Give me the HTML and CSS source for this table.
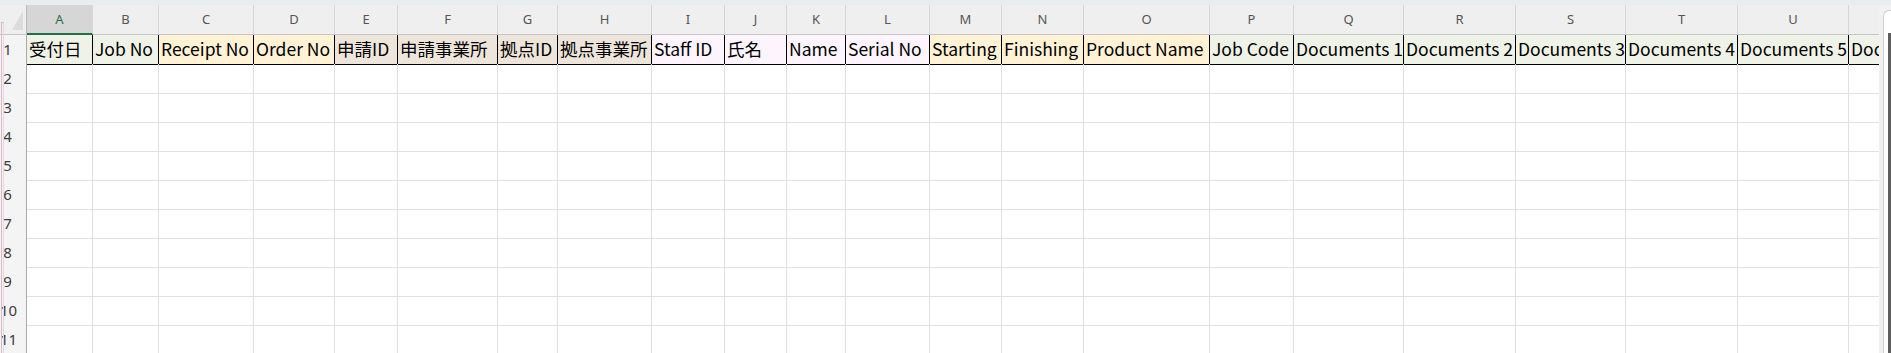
FILE: index.html
```html
<!DOCTYPE html>
<html lang="ja">
<head>
<meta charset="utf-8">
<title>Sheet</title>
<link rel="stylesheet" href="styles.css">
</head>
<body>
<div class="topband"></div>
<div class="main">
  <div class="sheet">
    <div class="edge"></div>
    <div class="row colhead">
      <div class="corner"><span class="tri"></span></div>
      <div class="ch sel">A</div><div class="ch">B</div><div class="ch">C</div><div class="ch">D</div><div class="ch">E</div><div class="ch">F</div><div class="ch">G</div><div class="ch">H</div><div class="ch">I</div><div class="ch">J</div><div class="ch">K</div><div class="ch">L</div><div class="ch">M</div><div class="ch">N</div><div class="ch">O</div><div class="ch">P</div><div class="ch">Q</div><div class="ch">R</div><div class="ch">S</div><div class="ch">T</div><div class="ch">U</div><div class="ch"></div>
    </div>
    <div class="row hdr">
      <div class="rh">1</div>
      <div class="h green">受付日</div>
      <div class="h green">Job No</div>
      <div class="h orange">Receipt No</div>
      <div class="h orange">Order No</div>
      <div class="h tan">申請ID</div>
      <div class="h tan">申請事業所</div>
      <div class="h tan">拠点ID</div>
      <div class="h tan">拠点事業所</div>
      <div class="h pink">Staff ID</div>
      <div class="h pink">氏名</div>
      <div class="h pink">Name</div>
      <div class="h pink">Serial No</div>
      <div class="h orange">Starting</div>
      <div class="h orange">Finishing</div>
      <div class="h orange">Product Name</div>
      <div class="h green">Job Code</div>
      <div class="h green">Documents 1</div>
      <div class="h green">Documents 2</div>
      <div class="h green">Documents 3</div>
      <div class="h green">Documents 4</div>
      <div class="h green">Documents 5</div>
      <div class="h green">Documents 6</div>
    </div>
    <div class="row"><div class="rh">2</div><div class="c"></div><div class="c"></div><div class="c"></div><div class="c"></div><div class="c"></div><div class="c"></div><div class="c"></div><div class="c"></div><div class="c"></div><div class="c"></div><div class="c"></div><div class="c"></div><div class="c"></div><div class="c"></div><div class="c"></div><div class="c"></div><div class="c"></div><div class="c"></div><div class="c"></div><div class="c"></div><div class="c"></div><div class="c"></div></div>
    <div class="row"><div class="rh">3</div><div class="c"></div><div class="c"></div><div class="c"></div><div class="c"></div><div class="c"></div><div class="c"></div><div class="c"></div><div class="c"></div><div class="c"></div><div class="c"></div><div class="c"></div><div class="c"></div><div class="c"></div><div class="c"></div><div class="c"></div><div class="c"></div><div class="c"></div><div class="c"></div><div class="c"></div><div class="c"></div><div class="c"></div><div class="c"></div></div>
    <div class="row"><div class="rh">4</div><div class="c"></div><div class="c"></div><div class="c"></div><div class="c"></div><div class="c"></div><div class="c"></div><div class="c"></div><div class="c"></div><div class="c"></div><div class="c"></div><div class="c"></div><div class="c"></div><div class="c"></div><div class="c"></div><div class="c"></div><div class="c"></div><div class="c"></div><div class="c"></div><div class="c"></div><div class="c"></div><div class="c"></div><div class="c"></div></div>
    <div class="row"><div class="rh">5</div><div class="c"></div><div class="c"></div><div class="c"></div><div class="c"></div><div class="c"></div><div class="c"></div><div class="c"></div><div class="c"></div><div class="c"></div><div class="c"></div><div class="c"></div><div class="c"></div><div class="c"></div><div class="c"></div><div class="c"></div><div class="c"></div><div class="c"></div><div class="c"></div><div class="c"></div><div class="c"></div><div class="c"></div><div class="c"></div></div>
    <div class="row"><div class="rh">6</div><div class="c"></div><div class="c"></div><div class="c"></div><div class="c"></div><div class="c"></div><div class="c"></div><div class="c"></div><div class="c"></div><div class="c"></div><div class="c"></div><div class="c"></div><div class="c"></div><div class="c"></div><div class="c"></div><div class="c"></div><div class="c"></div><div class="c"></div><div class="c"></div><div class="c"></div><div class="c"></div><div class="c"></div><div class="c"></div></div>
    <div class="row"><div class="rh">7</div><div class="c"></div><div class="c"></div><div class="c"></div><div class="c"></div><div class="c"></div><div class="c"></div><div class="c"></div><div class="c"></div><div class="c"></div><div class="c"></div><div class="c"></div><div class="c"></div><div class="c"></div><div class="c"></div><div class="c"></div><div class="c"></div><div class="c"></div><div class="c"></div><div class="c"></div><div class="c"></div><div class="c"></div><div class="c"></div></div>
    <div class="row"><div class="rh">8</div><div class="c"></div><div class="c"></div><div class="c"></div><div class="c"></div><div class="c"></div><div class="c"></div><div class="c"></div><div class="c"></div><div class="c"></div><div class="c"></div><div class="c"></div><div class="c"></div><div class="c"></div><div class="c"></div><div class="c"></div><div class="c"></div><div class="c"></div><div class="c"></div><div class="c"></div><div class="c"></div><div class="c"></div><div class="c"></div></div>
    <div class="row"><div class="rh">9</div><div class="c"></div><div class="c"></div><div class="c"></div><div class="c"></div><div class="c"></div><div class="c"></div><div class="c"></div><div class="c"></div><div class="c"></div><div class="c"></div><div class="c"></div><div class="c"></div><div class="c"></div><div class="c"></div><div class="c"></div><div class="c"></div><div class="c"></div><div class="c"></div><div class="c"></div><div class="c"></div><div class="c"></div><div class="c"></div></div>
    <div class="row"><div class="rh">10</div><div class="c"></div><div class="c"></div><div class="c"></div><div class="c"></div><div class="c"></div><div class="c"></div><div class="c"></div><div class="c"></div><div class="c"></div><div class="c"></div><div class="c"></div><div class="c"></div><div class="c"></div><div class="c"></div><div class="c"></div><div class="c"></div><div class="c"></div><div class="c"></div><div class="c"></div><div class="c"></div><div class="c"></div><div class="c"></div></div>
    <div class="row"><div class="rh">11</div><div class="c"></div><div class="c"></div><div class="c"></div><div class="c"></div><div class="c"></div><div class="c"></div><div class="c"></div><div class="c"></div><div class="c"></div><div class="c"></div><div class="c"></div><div class="c"></div><div class="c"></div><div class="c"></div><div class="c"></div><div class="c"></div><div class="c"></div><div class="c"></div><div class="c"></div><div class="c"></div><div class="c"></div><div class="c"></div></div>
  </div>
  <div class="vscroll"><div class="track"><div class="bar"></div></div></div>
</div>
</body>
</html>
```

FILE: styles.css
```css
html, body {
  margin: 0;
  padding: 0;
  height: 353px;
  overflow: hidden;
  background: #ffffff;
}

.topband {
  height: 5px;
  background: #e8eef0;
}

.main {
  display: flex;
  height: 348px;
}

.sheet {
  position: relative;
  flex: 1;
  overflow: hidden;
  min-width: 0;
}

.edge {
  position: absolute;
  left: 1px;
  top: 17px;
  bottom: 0;
  width: 1px;
  border-left: 1px solid #d9b8c8;
  border-right: 1px solid #ead6df;
  border-top: 1px solid #d9b8c8;
  z-index: 2;
}

.row {
  display: grid;
  grid-template-columns: 27px 66px 66px 95px 81px 63px 100px 60px 94px 73px 62px 59px 84px 72px 82px 126px 84px 110px 112px 110px 112px 111px 60px;
  height: 29px;
}

.colhead {
  height: 30px;
  background: #efefef;
}

.corner {
  position: relative;
  box-sizing: border-box;
  border-right: 1px solid #b9b9b9;
  border-bottom: 1px solid #c6c6c6;
  background: #efefef;
}

.tri {
  position: absolute;
  right: 3px;
  bottom: 4px;
  width: 0;
  height: 0;
  border-left: 11px solid transparent;
  border-bottom: 19px solid #dcdcdc;
}

.ch {
  box-sizing: border-box;
  border-right: 1px solid #d6d6d6;
  border-bottom: 1px solid #c6c6c6;
  font-family: "Noto Sans", "Open Sans", sans-serif;
  font-size: 13px;
  line-height: 16px;
  color: #555555;
  text-align: center;
  padding-top: 6px;
}

.ch.sel {
  background: #d6d6d6;
  border-bottom: 2px solid #1e7145;
  color: #1e7145;
}

.rh {
  box-sizing: border-box;
  background: #f4f4f4;
  border-right: 1px solid #a8a8a8;
  border-bottom: 1px solid #d8d8d8;
  font-family: "Noto Sans", "Open Sans", sans-serif;
  font-size: 15px;
  line-height: 29px;
  color: #3c3c3c;
  text-align: center;
  padding-right: 11px;
  white-space: nowrap;
}

.c {
  box-sizing: border-box;
  border-right: 1px solid #e1e1e1;
  border-bottom: 1px solid #e1e1e1;
}

.hdr .h {
  box-sizing: border-box;
  border-right: 1px solid #000;
  border-bottom: 1px solid #000;
  font-family: "Noto Sans CJK JP", "Noto Sans", sans-serif;
  font-size: 17.5px;
  line-height: 28px;
  color: #000;
  padding-left: 2px;
  white-space: nowrap;
  overflow: hidden;
}

.green { background: #eff3e7; }
.orange { background: #fff2d5; }
.tan { background: #eee5da; }
.pink { background: #fdf4fd; }

.vscroll {
  width: 12px;
  flex: none;
  background: #f1f1f1;
  box-sizing: border-box;
  padding: 5px 0 0 4px;
  display: flex;
}

.track {
  flex: 1;
  background: #ffffff;
  border-left: 1px solid #cfcfcf;
  border-top: 1px solid #cfcfcf;
  border-top-left-radius: 6px;
  display: flex;
  justify-content: flex-end;
  padding-top: 22px;
}

.bar {
  width: 3px;
  background: #5e5e5e;
}
```
